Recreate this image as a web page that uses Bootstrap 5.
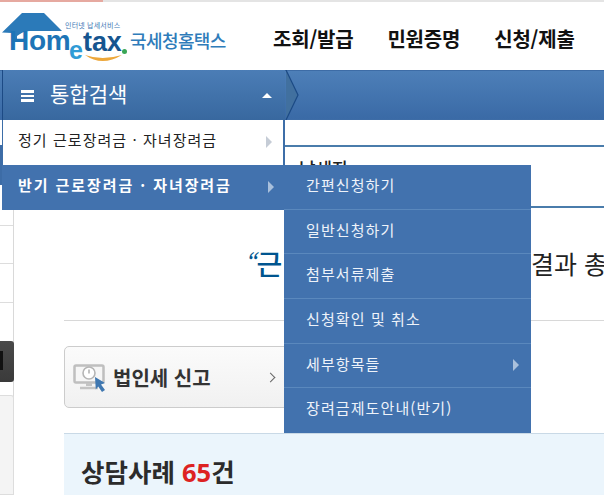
<!DOCTYPE html>
<html lang="ko">
<head>
<meta charset="utf-8">
<link href="https://cdn.jsdelivr.net/npm/bootstrap@5.3.0/dist/css/bootstrap.min.css" rel="stylesheet">
<style>
html,body{height:495px;overflow:hidden}
body{font-family:"Noto Sans CJK KR","Liberation Sans",sans-serif;background:#fff;position:relative;width:604px}
.topline{height:2px;background:#e4e4e4}
.topline i{display:block;height:2px;width:103px;background:#e6a9a0}
.hdr{height:68px}
.logo-box{width:252px;height:68px;position:relative;flex:none}
.logo-svg{position:absolute;left:0;top:7px}
.logo-tag{position:absolute;left:65px;top:19px;font-size:7px;color:#3e78b5;line-height:9px;letter-spacing:.2px;white-space:nowrap}
.logo-ho{position:absolute;left:9px;top:23px;font:700 28px/32px "Liberation Sans",sans-serif;color:#1d74b6;letter-spacing:-.3px;white-space:nowrap}
.logo-e{position:absolute;left:69px;top:36px;font:700 25px/24px "Liberation Sans",sans-serif;color:#2f9bd6}
.logo-tax{position:absolute;left:83px;top:24px;font:700 27px/32px "Liberation Sans",sans-serif;color:#16558f;letter-spacing:-.1px;white-space:nowrap}
.logo-dot{position:absolute;left:122px;top:47px;width:5px;height:5px;border-radius:50%;background:#3aa655}
.logo-kr{position:absolute;left:130px;top:26px;font-size:18px;line-height:24px;color:#2f7cba;font-weight:500;letter-spacing:-.6px;white-space:nowrap}
.gnb{gap:34px;padding-top:23px;margin-left:21px;font-size:20px;font-weight:700;color:#111;line-height:28px;white-space:nowrap;letter-spacing:-.2px}
.bluebar{height:50px;background:linear-gradient(#4d7fb8,#3a6aa6);border-top:1px solid #3d6ca6;border-bottom:1px solid #3d6ca6}
.sidemenu{position:absolute;left:2px;top:70px;width:283px;z-index:5}
.sm-head{height:50px;background:linear-gradient(#4b7db6,#38689f);color:#fff;font-size:21px;line-height:47px;padding-left:18px;border-left:1px solid #1c4a85;position:relative}
.sm-head svg.chev{position:absolute;left:282px;top:0}
.burger{display:inline-block;width:13px;height:12px;border-top:3px solid #fff;border-bottom:3px solid #fff;position:relative;margin-right:16px;vertical-align:0}
.burger::after{content:"";position:absolute;left:0;right:0;top:2px;height:2px;background:#fff}
.caret-up{position:absolute;right:13px;top:23px;border:5px solid transparent;border-top:0;border-bottom:5px solid #fff}
.sm-row{height:45px;font-size:15px;line-height:40px;padding-left:15px;position:relative;letter-spacing:1.05px;white-space:nowrap}
.sm-1{background:#fff;color:#222;border-left:1px solid #3d6ea8;border-right:2px solid #3d6ea8}
.sm-2{background:#4272ae;color:#fff;font-weight:700;letter-spacing:1.92px;padding-left:16px;line-height:39px}
.tri{position:absolute;right:11px;top:16px;border:6px solid transparent;border-right:0;border-left:6px solid #c5ccd6}
.sm-2 .tri{border-left-color:#a9c0dc}
.submenu{position:absolute;left:284px;top:165px;width:247px;height:268px;background:#4272ae;color:#eef3fa;z-index:6;font-size:15px}
.sub-row{height:44.7px;line-height:40px;padding-left:22px;border-bottom:1px solid #5a88bd;position:relative;letter-spacing:1.1px}
.sub-row:last-child{border-bottom:0}
.sub-row .tri{right:12px;top:15px;border-left-color:#a9c0dc}
.leftcol{position:absolute;left:0;top:210px;width:14px;height:285px;border-right:1px solid #d9d9d9}
.leftcol b{position:absolute;left:0;width:13px;height:1px;background:#ddd}
.darkbtn{position:absolute;left:0;top:131px;width:14px;height:41px;background:linear-gradient(#4a4a4a,#3a3a3a);border-radius:0 3px 3px 0}
.darkbtn::after{content:"";position:absolute;left:0;top:10px;width:3px;height:19px;background:#111}
.greybox{position:absolute;left:0;top:185px;width:14px;height:100px;background:#f4f4f4;border:1px solid #ddd;border-left:0;border-radius:0 3px 0 0}
.leftedge{position:absolute;left:0;top:145px;width:2px;height:40px;background:#3d6ca6}
.title-peek{position:absolute;left:299px;top:155px;font-size:18px;line-height:26px;font-weight:500;color:#222}
.rule-blue{position:absolute;left:285px;right:0;height:2px;background:#4a7cab}
.quote{position:absolute;left:244px;top:244px;font-size:28px;line-height:38px;font-weight:500;color:#00558f;white-space:nowrap}
.quote span{font-size:24px;font-style:italic;font-weight:400;vertical-align:2px;margin-right:1px}
.quote2{position:absolute;left:531px;top:246px;font-size:25px;line-height:34px;color:#222;white-space:nowrap}
.rule-grey{position:absolute;left:64px;right:0;top:320px;height:1px;background:#d8d8d8}
.taxbtn{position:absolute;left:64px;top:346px;width:240px;height:62px;background:linear-gradient(#fbfbfb,#f1f1f1);border:1px solid #ccc;border-radius:5px}
.taxbtn svg{position:absolute;left:8px;top:17px}
.taxbtn span{position:absolute;left:48px;top:16px;font-size:20px;line-height:30px;font-weight:700;color:#333;white-space:nowrap}
.taxbtn em{position:absolute;left:202px;top:27px;width:7px;height:7px;border-top:1.5px solid #666;border-right:1.5px solid #666;transform:rotate(45deg)}
.consult{position:absolute;left:64px;right:0;top:433px;height:62px;background:#ebf5fc;border-top:1px solid #c9d9e6}
.consult h2{font-size:25.5px;line-height:34px;font-weight:700;color:#2b2b2b;margin:0;position:absolute;left:17px;top:20px;white-space:nowrap}
.consult h2 span{color:#dd2222;font-weight:700;font-family:"Open Sans","Noto Sans",sans-serif}
</style>
</head>
<body>
<div class="topline"><i></i></div>
<div class="hdr d-flex">
  <div class="logo-box">
    <svg class="logo-svg" width="70" height="40" viewBox="0 0 70 40"><path d="M2 23.5 L22 4 H44 L62 22 H30 Q24 22 20 25 L17 27 V31 H12 V24 Z" fill="#2b7ab9"/></svg>
    <span class="logo-tag">인터넷 납세서비스</span>
    <span class="logo-ho">Hom</span>
    <span class="logo-e">e</span>
    <span class="logo-tax">tax</span>
    <span class="logo-dot"></span>
    <svg class="position-absolute" style="left:84px;top:52px" width="40" height="12" viewBox="0 0 40 12"><path d="M1 1 Q18 13 38 1 Q18 7 1 1Z" fill="#eda73a"/></svg>
    <span class="logo-kr">국세청홈택스</span>
  </div>
  <div class="gnb d-flex"><span>조회/발급</span><span>민원증명</span><span>신청/제출</span></div>
</div>
<div class="bluebar"></div>

<div class="leftedge"></div>
<div class="leftcol">
  <b style="top:15px"></b><b style="top:53px"></b><b style="top:92px"></b>
  <div class="darkbtn"></div><div class="greybox"></div>
</div>

<div class="rule-blue" style="top:145px"></div>
<div class="title-peek">납세자</div>
<div class="rule-blue" style="top:206px"></div>
<div class="quote"><span>“</span>근</div>
<div class="quote2">결과 총</div>
<div class="rule-grey"></div>
<div class="taxbtn">
  <svg width="34" height="30" viewBox="0 0 34 30"><rect x="1.5" y="1.5" width="29" height="17" rx="1.5" fill="#f6f6f6" stroke="#bfbfbf" stroke-width="2.5"/><circle cx="16" cy="9" r="6" fill="#fff" stroke="#b5b5b5" stroke-width="1.6"/><path d="M16 5.5v4" stroke="#999" stroke-width="1.2"/><path d="M13 19h6v3h-6z" fill="#c4c4c4"/><path d="M7 24h18" stroke="#c4c4c4" stroke-width="2.5"/><path d="M22 13l10 6-4 1.5 4 5.5-3 2-3.8-5.5-2.4 3z" fill="#3f77b0"/></svg>
  <span>법인세 신고</span><em></em>
</div>
<div class="consult"><h2>상담사례 <span>65</span>건</h2></div>

<div class="sidemenu">
  <div class="sm-head"><span class="burger"></span>통합검색<span class="caret-up"></span>
    <svg class="chev" width="16" height="50" viewBox="0 0 16 50"><path d="M1 0L13 25 1 50Z" fill="#41709f"/><path d="M1 0L13 25 1 50" fill="none" stroke="#1c4a85" stroke-width="1.2"/></svg>
  </div>
  <div class="sm-row sm-1">정기 근로장려금 · 자녀장려금<span class="tri"></span></div>
  <div class="sm-row sm-2">반기 근로장려금 · 자녀장려금<span class="tri"></span></div>
</div>
<div class="submenu">
  <div class="sub-row">간편신청하기</div>
  <div class="sub-row">일반신청하기</div>
  <div class="sub-row">첨부서류제출</div>
  <div class="sub-row">신청확인 및 취소</div>
  <div class="sub-row">세부항목들<span class="tri"></span></div>
  <div class="sub-row">장려금제도안내(반기)</div>
</div>
<script src="https://cdn.jsdelivr.net/npm/bootstrap@5.3.0/dist/js/bootstrap.bundle.min.js"></script>
</body>
</html>
